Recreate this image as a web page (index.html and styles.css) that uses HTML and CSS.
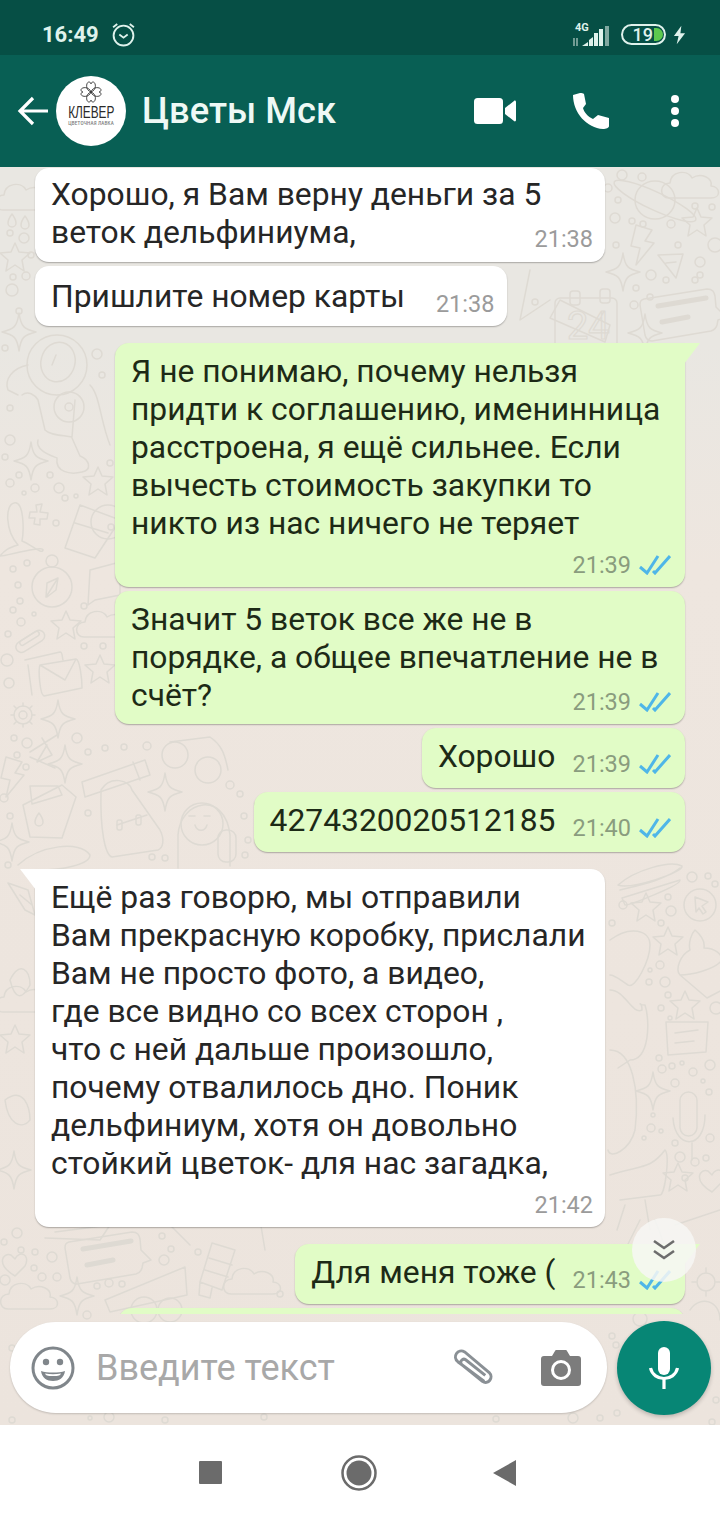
FILE: index.html
```html
<!DOCTYPE html>
<html lang="ru">
<head>
<meta charset="utf-8">
<title>Цветы Мск</title>
<link rel="stylesheet" href="styles.css">
</head>
<body>
<svg class="defs" width="0" height="0" aria-hidden="true">
  <defs>
    <symbol id="ticks" viewBox="0 0 32 20"><path d="M1 12l7 6L19 1M14 16l2 2L31 1" fill="none" stroke="#4fb6e8" stroke-width="3"/></symbol>
    <path id="sp" d="M0-19C2-5 5-3 17 0 5 3 2 5 0 19-2 5-5 3-17 0-5-3-2-5 0-19Z"/>
    <path id="st" d="M0-15 4-6 15-5 7 2 9 13 0 7-9 13-7 2-15-5-4-6Z"/>
    <path id="cl" d="M-24 12C-34 12-34-3-23-3-22-15-6-17-1-8 8-14 20-8 18 0 28 1 28 12 18 12Z"/>
    <path id="bo" d="M-6-20 10-15 3-4 12-2-6 20-2 3-11 1Z"/>
    <path id="dr" d="M0-7C3-3 4-1 4 2A4 4 0 0 1-4 2C-4-1-3-3 0-7Z"/>
    <path id="he" d="M0 12C-20 0-12-12-4-9L0-5C4-14 16-10 10 2Z"/>
    <g id="ch"><path d="M-36-16 27-26C33-26 34-23 35-19L36-8 46 2 38 5 37 10 C36 14 34 15 31 16L-28 26C-32 26-34 24-35 20L-40-10C-40-14-39-15-36-16Z"/><path d="M-22-9 26-17 M-18 7 8 2" stroke-width="5"/></g>
  </defs>
</svg>
<div class="phone">
  <div class="status">
    <span class="clock">16:49</span>
    <svg class="alarm" viewBox="0 0 24 24"><circle cx="12" cy="13" r="9.5"/><path d="M2 5l4-3M22 5l-4-3M8 12l4 3 4-3"/></svg>
    <span class="spacer"></span>
    <span class="net">
      <span class="net-g">4G</span>
      <svg class="bars" viewBox="0 0 38 20"><path d="M2 20v-8M5 12v8" stroke="#9fbdb6" stroke-width="1.4"/><path d="M10 20h6v-4zM17 20h4v-9l-4 3zM22 20h4V7h-4zM27 20h4V3h-4z" fill="#dff2ec"/><path d="M33 20h4V0h-4z" fill="#7fa8a0"/></svg>
    </span>
    <span class="battery"><span class="batt-num">19</span><span class="batt-fill"></span></span>
    <svg class="bolt" viewBox="0 0 14 20"><path d="M9 0 1 11h5l-2 9 9-12H8z" fill="#dff2ec"/></svg>
  </div>
  <header class="toolbar">
    <svg class="back" viewBox="0 0 32 30"><path d="M31 15H3M16 2 3 15l13 13" fill="none" stroke="#fff" stroke-width="3.2"/></svg>
    <div class="avatar">
      <svg class="clover" viewBox="0 0 24 24"><path d="M12 12C6 10 7 2 10 2c1 0 2 1 2 2 0-1 1-2 2-2 3 0 4 8-2 10ZM12 12c2-6 10-5 10-2 0 1-1 2-2 2 1 0 2 1 2 2 0 3-8 4-10-2ZM12 12c6 2 5 10 2 10-1 0-2-1-2-2 0 1-1 2-2 2-3 0-4-8 2-10ZM12 12c-2 6-10 5-10 2 0-1 1-2 2-2-1 0-2-1-2-2 0-3 8-4 10 2Z" fill="none" stroke="#333" stroke-width=".9"/></svg>
      <span class="brand">КЛЕВЕР</span>
      <span class="brand-sub">ЦВЕТОЧНАЯ ЛАВКА</span>
    </div>
    <h1 class="title">Цветы Мск</h1>
    <svg class="video" viewBox="0 0 42 26"><rect width="29" height="26" rx="3.5" fill="#fff"/><path d="M31 10 40 3c1-1 2 0 2 1v18c0 1-1 2-2 1l-9-7z" fill="#fff"/></svg>
    <svg class="call" viewBox="0 0 36 36"><path d="M7 0 0 2C0 20 14 35 30 36 33 36 36 35 36 33V25L25 22 20 26C15 24 11 19 10 15L13 11 11 1C10 0 9 0 7 0Z" fill="#fff"/></svg>
    <div class="dots"><i></i><i></i><i></i></div>
  </header>
  <main class="wall">
    <svg class="doodles" viewBox="0 167 720 1258" aria-hidden="true">
      <g class="dd">
        <use href="#cl" x="27" y="198"/><use href="#dr" x="12" y="221"/><use href="#dr" x="25" y="223"/><use href="#st" x="15" y="258"/><use href="#sp" x="19" y="332"/>
        <use href="#cl" x="693" y="186"/><use href="#st" x="697" y="223"/><use href="#bo" x="642" y="245"/><use href="#sp" x="623" y="272"/><use href="#sp" x="645" y="333"/><use href="#ch" x="680" y="315"/>
        <ellipse cx="655" cy="200" rx="20" ry="19"/><ellipse cx="655" cy="201" rx="45" ry="9" transform="rotate(25 655 201)"/>
        <path d="M658 255 683 254 676 278ZM666 263 676 262"/>
        <path d="M560 300 610 325 605 342 550 318ZM530 270 520 320 550 300"/>
        <g><rect x="555" y="298" width="62" height="58" rx="5"/><rect x="570" y="291" width="10" height="14" rx="3"/><rect x="600" y="289" width="10" height="14" rx="3"/><text x="567" y="339" class="t24">24</text></g>
        <circle cx="57" cy="365" r="30"/><ellipse cx="58" cy="362" rx="17" ry="20" transform="rotate(15 58 362)"/><path d="M52 365 56 355"/><path d="M28 365C12 368 4 380 8 390L18 395M22 395C28 390 35 395 38 400L45 430C50 435 60 435 72 437L75 400"/><circle cx="69" cy="407" r="15"/><circle cx="69" cy="407" r="4"/><path d="M38 440C35 450 50 455 57 458 55 472 70 475 82 472 92 470 90 460 80 456L72 438M90 385C100 395 100 420 110 445"/>
        <use href="#sp" x="31" y="461"/><use href="#st" x="98" y="482"/>
        <path d="M0 556C5 550 8 548 18 545 5 530 5 505 14 503 24 500 24 530 22 541 32 545 42 555 43 550 44 545 2 557 0 556Z"/><path d="M36 505 42 504 40 512 48 513 47 519 40 519 40 525 34 524 35 518 29 518 30 512 37 512Z"/>
        <path d="M80 505 120 520 95 558 65 548ZM75 523 108 533"/><circle cx="108" cy="522" r="17"/>
        <circle cx="52" cy="587" r="20"/><circle cx="52" cy="561" r="6"/><path d="M58 578 46 597 47 583ZM58 578 56 590 47 597"/>
        <path d="M90 570 120 562V595L95 600 88 605Z"/><use href="#cl" x="108" y="625"/><rect x="14" y="636" width="32" height="11" rx="5.5" transform="rotate(-32 30 641)"/><rect x="20" y="636" width="22" height="5" rx="2.5" transform="rotate(-32 30 641)"/>
        <use href="#st" x="66" y="626"/><use href="#st" x="100" y="670"/>
        <path d="M25 660 60 652C63 652 62 658 63 660M32 695 28 665"/><path d="M40 665 76 659C80 660 82 680 82 688L44 696C40 695 38 670 40 665ZM40 665 65 680 76 659"/>
        <circle cx="23" cy="715" r="9"/><circle cx="23" cy="715" r="4"/><path d="M23 703v3M23 724v3M11 715h3M32 715h3M14 706l2 2M32 706l-2 2M14 724l2-2M32 724l-2-2"/>
        <use href="#sp" x="58" y="719"/><use href="#sp" x="65" y="764"/><use href="#sp" x="165" y="792"/><use href="#sp" x="12" y="842"/><use href="#bo" x="12" y="777"/>
        <path d="M30 752 57 735M30 757 55 768M42 738 52 755 37 762 47 745"/>
        <path d="M23 805 62 785 76 797 62 838 30 837ZM30 786H58L62 795 32 804ZM62 838 76 797"/><use href="#dr" x="39" y="820"/>
        <path d="M82 782 145 760 150 775 85 797ZM133 762 140 780"/><path d="M101 790C110 775 130 780 132 790L160 830C165 840 163 848 158 850L112 857C105 855 100 830 101 790ZM117 825 147 815"/><rect x="117" y="820" width="5" height="10" rx="2"/><rect x="136" y="815" width="5" height="10" rx="2"/>
        <circle cx="175" cy="755" r="13"/><circle cx="208" cy="770" r="13"/><path d="M170 742 210 737C222 745 225 755 228 770"/>
        <path d="M178 868V835C180 800 225 790 230 835V866"/><circle cx="202" cy="824" r="21"/><path d="M195 825C197 832 205 832 207 825M189 816h6M204 816h6"/><rect x="218" y="830" width="18" height="32" rx="8"/>
        <path d="M18 865C40 845 80 840 90 855 90 865 60 870 40 870"/><path d="M8 883 28 890 35 915 25 910ZM20 895 32 905"/>
        <path d="M10 980C20 960 30 970 30 985 22 1000 15 1000 10 980ZM5 1100C25 1085 30 1110 30 1120 22 1130 8 1125 5 1100Z"/><use href="#st" x="15" y="1040"/><use href="#sp" x="14" y="1170"/><use href="#cl" x="27" y="1000"/>
        <path d="M618 885C635 870 670 860 682 866 685 872 630 890 618 885ZM620 890C640 885 665 880 680 868M622 898 680 880C682 885 630 905 625 905Z"/>
        <circle cx="700" cy="905" r="16"/><path d="M695 897 708 902 702 906 706 912 703 914 699 908 696 912Z"/>
        <use href="#st" x="646" y="908"/><use href="#st" x="668" y="942"/><use href="#st" x="685" y="1006"/><use href="#st" x="678" y="1178"/>
        <path d="M690 950C688 942 692 933 695 930 702 936 705 942 704 948 716 948 722 955 722 960 715 970 690 975 680 975 675 970 680 955 690 950ZM680 975 707 998 722 990V968"/>
        <path d="M610 940C630 925 650 930 650 945 650 960 635 990 628 985 620 980 615 975 610 975M610 990C625 990 632 1015 642 1010 642 1000 636 1005 645 1005 650 1020 650 1060 630 1060L618 1068"/>
        <path d="M666 1022 708 1022 706 1052 668 1055ZM675 1033 698 1030M675 1043 694 1041"/>
        <use href="#sp" x="653" y="1091"/>
        <rect x="680" y="1092" width="17" height="44" rx="8.5"/><path d="M673 1118C675 1150 705 1150 705 1115M692 1143V1160"/>
        <path d="M610 1050C632 1050 640 1090 635 1130 630 1150 610 1160 608 1150"/>
        <path d="M610 1175C640 1165 650 1170 665 1150 670 1155 665 1195 660 1195L620 1200M617 1230 625 1205M650 1230 645 1200"/>
        <use href="#he" x="712" y="1180"/>
        <circle cx="706" cy="1282" r="9"/><path d="M706 1268v4M706 1292v4M692 1282h4M716 1282h4"/><path d="M640 1220 625 1250M655 1220 670 1260M675 1225 720 1210"/>
        <circle cx="640" cy="1319" r="7"/><path d="M690 1310C700 1295 720 1300 720 1320"/>
        <use href="#ch" x="105" y="1258"/><use href="#he" x="15" y="1264"/><use href="#cl" x="32" y="1297"/><use href="#cl" x="255" y="1282"/><use href="#sp" x="77" y="1296"/>
        <path d="M212 1243 235 1250 222 1290 200 1282ZM205 1270 228 1277M209 1258 232 1265M200 1282 199 1295 210 1298 212 1288"/>
        <path d="M185 1267 105 1300 110 1312 187 1295Z"/><circle cx="144" cy="1310" r="13"/><circle cx="170" cy="1310" r="12"/>
        <path d="M55 1232 110 1225 100 1240 45 1238"/><path d="M170 1225 190 1245M260 1220 265 1250M280 1215C290 1225 300 1220 305 1210"/>
      </g>
      <g class="dots-bg">
        <circle cx="10" cy="233" r="3"/><circle cx="24" cy="238" r="5"/><circle cx="31" cy="255" r="3"/><circle cx="13" cy="277" r="3"/><circle cx="26" cy="276" r="4"/><circle cx="12" cy="290" r="6"/><circle cx="19" cy="311" r="3"/><circle cx="5" cy="348" r="3"/>
        <circle cx="622" cy="175" r="5"/><circle cx="642" cy="177" r="4"/><circle cx="608" cy="188" r="4"/><circle cx="618" cy="200" r="3"/><circle cx="615" cy="218" r="5"/><circle cx="632" cy="221" r="3"/><circle cx="643" cy="224" r="3"/><circle cx="671" cy="224" r="4"/><circle cx="616" cy="245" r="3"/><circle cx="678" cy="245" r="3"/><circle cx="695" cy="206" r="3"/><circle cx="712" cy="207" r="3"/><circle cx="715" cy="245" r="7"/><circle cx="700" cy="262" r="5"/><circle cx="651" cy="275" r="5"/><circle cx="695" cy="280" r="3"/><circle cx="666" cy="280" r="3"/><circle cx="636" cy="288" r="3"/><circle cx="634" cy="305" r="4"/><circle cx="650" cy="297" r="3"/><circle cx="535" cy="302" r="3"/><circle cx="700" cy="275" r="3"/>
        <circle cx="10" cy="483" r="4"/><circle cx="19" cy="475" r="3"/><circle cx="24" cy="493" r="2"/><circle cx="35" cy="488" r="4"/><circle cx="50" cy="475" r="3"/><circle cx="59" cy="488" r="5"/><circle cx="65" cy="498" r="3"/><circle cx="76" cy="496" r="2"/><circle cx="56" cy="523" r="3"/><circle cx="5" cy="457" r="3"/><circle cx="10" cy="440" r="5"/><circle cx="10" cy="408" r="3"/><circle cx="97" cy="354" r="5"/><circle cx="102" cy="375" r="3"/><circle cx="110" cy="463" r="3"/>
        <circle cx="13" cy="569" r="3"/><circle cx="27" cy="563" r="3"/><circle cx="18" cy="585" r="3"/><circle cx="20" cy="601" r="3"/><circle cx="13" cy="610" r="3"/><circle cx="21" cy="622" r="4"/><circle cx="34" cy="614" r="2"/><circle cx="8" cy="634" r="3"/><circle cx="84" cy="606" r="3"/><circle cx="84" cy="646" r="3"/><circle cx="103" cy="646" r="3"/><circle cx="7" cy="660" r="6"/><circle cx="9" cy="683" r="5"/><circle cx="111" cy="527" r="3"/>
        <circle cx="77" cy="738" r="5"/><circle cx="14" cy="738" r="3"/><circle cx="27" cy="743" r="5"/><circle cx="17" cy="755" r="3"/><circle cx="26" cy="767" r="3"/><circle cx="88" cy="752" r="3"/><circle cx="105" cy="748" r="3"/><circle cx="124" cy="747" r="3"/><circle cx="147" cy="746" r="4"/><circle cx="4" cy="798" r="4"/><circle cx="10" cy="816" r="3"/><circle cx="88" cy="813" r="3"/><circle cx="230" cy="785" r="4"/><circle cx="240" cy="794" r="3"/><circle cx="244" cy="816" r="3"/><circle cx="248" cy="840" r="3"/><circle cx="245" cy="855" r="3"/><circle cx="165" cy="858" r="3"/><circle cx="152" cy="857" r="3"/><circle cx="8" cy="865" r="3"/>
        <circle cx="692" cy="877" r="5"/><circle cx="708" cy="876" r="3"/><circle cx="715" cy="884" r="3"/><circle cx="623" cy="905" r="4"/><circle cx="612" cy="923" r="3"/><circle cx="668" cy="897" r="3"/><circle cx="671" cy="911" r="5"/><circle cx="661" cy="923" r="3"/><circle cx="650" cy="970" r="2"/><circle cx="660" cy="965" r="4"/><circle cx="649" cy="982" r="3"/><circle cx="665" cy="982" r="5"/><circle cx="668" cy="995" r="3"/><circle cx="661" cy="1008" r="3"/><circle cx="670" cy="1018" r="2"/><circle cx="716" cy="1008" r="6"/><circle cx="659" cy="1058" r="3"/><circle cx="662" cy="1069" r="4"/><circle cx="672" cy="1066" r="3"/><circle cx="682" cy="1063" r="2"/><circle cx="693" cy="1072" r="4"/><circle cx="710" cy="1065" r="5"/><circle cx="675" cy="1083" r="4"/><circle cx="703" cy="1081" r="2"/><circle cx="709" cy="1092" r="3"/><circle cx="653" cy="1115" r="2"/><circle cx="651" cy="1128" r="4"/><circle cx="661" cy="1131" r="2"/><circle cx="644" cy="1138" r="2"/><circle cx="675" cy="1143" r="3"/><circle cx="680" cy="1157" r="5"/><circle cx="710" cy="1138" r="4"/><circle cx="695" cy="1162" r="4"/><circle cx="706" cy="1158" r="3"/><circle cx="685" cy="1178" r="3"/>
        <circle cx="17" cy="1233" r="5"/><circle cx="21" cy="1250" r="3"/><circle cx="35" cy="1252" r="3"/><circle cx="4" cy="1242" r="3"/><circle cx="52" cy="1257" r="5"/><circle cx="34" cy="1268" r="3"/><circle cx="42" cy="1277" r="4"/><circle cx="57" cy="1277" r="4"/><circle cx="5" cy="1280" r="5"/><circle cx="97" cy="1286" r="3"/><circle cx="109" cy="1283" r="4"/><circle cx="122" cy="1284" r="3"/><circle cx="164" cy="1260" r="5"/><circle cx="171" cy="1249" r="3"/><circle cx="198" cy="1252" r="3"/><circle cx="162" cy="1236" r="3"/><circle cx="87" cy="1315" r="4"/><circle cx="280" cy="1294" r="3"/>
        <circle cx="12" cy="1348" r="3"/><circle cx="12" cy="1420" r="3"/><circle cx="90" cy="1418" r="2"/><circle cx="109" cy="1417" r="5"/><circle cx="165" cy="1420" r="3"/><circle cx="264" cy="1417" r="3"/><circle cx="617" cy="1413" r="3"/><circle cx="600" cy="1418" r="3"/><circle cx="573" cy="1418" r="5"/><circle cx="496" cy="1419" r="3"/><circle cx="612" cy="1336" r="3"/><circle cx="616" cy="1345" r="3"/><circle cx="716" cy="1400" r="3"/><circle cx="712" cy="1422" r="3"/>
      </g>
    </svg>
    <section class="chat">
      <div class="msg in top">
        <p class="text">Хорошо, я Вам верну деньги за 5<br>веток дельфиниума,</p>
        <div class="meta over"><time>21:38</time></div>
      </div>
      <div class="msg in single near">
        <p class="text">Пришлите номер карты</p>
        <div class="meta"><time>21:38</time></div>
      </div>
      <div class="msg out tail">
        <p class="text">Я не понимаю, почему нельзя<br>придти к соглашению, именинница<br>расстроена, я ещё сильнее. Если<br>вычесть стоимость закупки то<br>никто из нас ничего не теряет</p>
        <div class="meta below"><time>21:39</time><svg class="ticks"><use href="#ticks"/></svg></div>
      </div>
      <div class="msg out near">
        <p class="text">Значит 5 веток все же не в<br>порядке, а общее впечатление не в<br>счёт?</p>
        <div class="meta over"><time>21:39</time><svg class="ticks"><use href="#ticks"/></svg></div>
      </div>
      <div class="msg out single near">
        <p class="text">Хорошо</p>
        <div class="meta"><time>21:39</time><svg class="ticks"><use href="#ticks"/></svg></div>
      </div>
      <div class="msg out single near">
        <p class="text">4274320020512185</p>
        <div class="meta"><time>21:40</time><svg class="ticks"><use href="#ticks"/></svg></div>
      </div>
      <div class="msg in tail">
        <p class="text">Ещё раз говорю, мы отправили<br>Вам прекрасную коробку, прислали<br>Вам не просто фото, а видео,<br>где все видно со всех сторон ,<br>что с ней дальше произошло,<br>почему отвалилось дно. Поник<br>дельфиниум, хотя он довольно<br>стойкий цветок- для нас загадка,</p>
        <div class="meta below"><time>21:42</time></div>
      </div>
      <div class="msg out single tail">
        <p class="text">Для меня тоже (</p>
        <div class="meta"><time>21:43</time><svg class="ticks"><use href="#ticks"/></svg></div>
      </div>
      <div class="msg out cut near"><p class="text">&nbsp;</p></div>
      <button class="jump" type="button" aria-label="Вниз">
        <svg viewBox="0 0 24 22"><path d="M2 2l10 7 10-7M2 12l10 7 10-7" fill="none" stroke="#6d6d6d" stroke-width="2.6"/></svg>
      </button>
    </section>
    <footer class="composer">
      <div class="input">
        <svg class="smile" viewBox="0 0 44 44"><circle cx="22" cy="22" r="20" fill="none" stroke="#80868b" stroke-width="3"/><circle cx="15" cy="16" r="3.2" fill="#80868b"/><circle cx="29" cy="16" r="3.2" fill="#80868b"/><path d="M10 25c6 2 18 2 24 0-1 7-6 10-12 10s-11-3-12-10z" fill="#80868b"/><path d="M14 27.500c5 1 11 1 16 0-1 2-2 2.500-8 2.500s-7-.5-8-2.500z" fill="#fff"/></svg>
        <span class="placeholder">Введите текст</span>
        <svg class="clip" viewBox="0 0 44 40"><path d="M35 33 8 13C2 8 8-1 15 3l25 21c5 5-1 13-7 9L12 16c-3-3 1-7 4-5l20 16" fill="none" stroke="#8a9095" stroke-width="3" transform="translate(0 1) scale(.98)"/></svg>
        <svg class="camera" viewBox="0 0 40 36"><path d="M3 6h8l3-5c0-1 1-1 2-1h8c1 0 2 0 2 1l3 5h8c2 0 3 1 3 3v24c0 2-1 3-3 3H3c-2 0-3-1-3-3V9c0-2 1-3 3-3z" fill="#7c7c7c"/><circle cx="20" cy="20" r="8.500" fill="#7c7c7c" stroke="#fff" stroke-width="3"/></svg>
      </div>
      <button class="mic" type="button" aria-label="Голос">
        <svg viewBox="0 0 30 42"><rect x="9" y="0" width="12" height="28" rx="6" fill="#fff"/><path d="M1.500 21C3 28 9 31.500 15 31.500S27 28 28.500 21M15 31v11" fill="none" stroke="#fff" stroke-width="3.200"/></svg>
      </button>
    </footer>
  </main>
  <nav class="navbar">
    <span class="nav-square"></span>
    <svg class="nav-home" viewBox="0 0 36 36"><circle cx="18" cy="18" r="16.500" fill="none" stroke="#6b6b6b" stroke-width="2.500"/><circle cx="18" cy="18" r="12.500" fill="#6b6b6b"/></svg>
    <svg class="nav-back" viewBox="0 0 24 26"><path d="M0 13 23 0v26z" fill="#6b6b6b"/></svg>
  </nav>
</div>
</body>
</html>
```
FILE: styles.css
```css
* { box-sizing: border-box; }
html, body { margin: 0; padding: 0; }
body { font-family: Roboto, "Noto Sans", sans-serif; background: #fff; }
.defs { position: absolute; }
.phone { width: 720px; height: 1520px; display: flex; flex-direction: column; overflow: hidden; }

.status { height: 55px; flex: none; background: #064f45; display: flex; align-items: center; padding: 14px 34px 0 42px; color: #dff2ec; }
.clock { font-size: 22px; font-weight: 700; }
.alarm { width: 25px; height: 25px; margin-left: 12px; fill: none; stroke: #dff2ec; stroke-width: 1.8; }
.spacer { flex: 1; }
.net { position: relative; width: 38px; height: 22px; margin-right: 11px; }
.net-g { position: absolute; left: 3px; top: -1px; font-size: 11px; font-weight: 700; line-height: 10px; }
.bars { position: absolute; left: 0; top: 2px; width: 38px; height: 20px; }
.battery { width: 45px; height: 21px; border: 2px solid #dff2ec; border-radius: 11px; display: flex; align-items: center; justify-content: flex-end; padding-right: 1px; gap: 1px; }
.batt-num { font-size: 18px; font-weight: 500; line-height: 17px; }
.batt-fill { width: 9px; height: 13px; background: #5dc94e; border-radius: 0 7px 7px 0; }
.bolt { width: 13px; height: 20px; margin-left: 7px; }

.toolbar { height: 112px; flex: none; background: #085f54; display: flex; align-items: center; padding-left: 17px; position: relative; z-index: 2; }
.back { width: 32px; height: 30px; flex: none; }
.avatar { width: 70px; height: 70px; border-radius: 50%; background: #fff; margin-left: 7px; flex: none; display: flex; flex-direction: column; align-items: center; color: #2a2a2a; padding-top: 4px; }
.clover { width: 24px; height: 24px; flex: none; }
.brand { font-family: "Liberation Sans", sans-serif; font-size: 16px; line-height: 16px; transform: scaleX(.74); margin-top: 1px; }
.brand-sub { font-size: 4.500px; line-height: 5px; font-weight: 500; color: #777; letter-spacing: .2px; white-space: nowrap; }
.title { margin: 0 0 0 16px; flex: 1; font-size: 36.300px; font-weight: 500; line-height: 40px; color: #eef9f5; white-space: nowrap; }
.video { width: 42px; height: 26px; flex: none; margin-right: 57px; }
.call { width: 36px; height: 36px; flex: none; margin-right: 62px; margin-top: -1px; }
.dots { width: 9px; flex: none; margin-right: 40px; display: flex; flex-direction: column; gap: 4px; }
.dots i { width: 8px; height: 8px; border-radius: 50%; background: #fff; display: block; }

.wall { flex: 1; min-height: 0; position: relative; display: flex; flex-direction: column; background: linear-gradient(#e9e7e2 0, #e9e7e2 14%, #eee6df 32%, #ece4dd 100%); }
.doodles { position: absolute; inset: 0; width: 720px; height: 1258px; }
.dd { fill: none; stroke: #dedad3; stroke-width: 1.500; stroke-linejoin: round; stroke-linecap: round; }
.dots-bg { fill: none; stroke: #dedad3; stroke-width: 1.500; }
.t24 { font-family: Roboto, sans-serif; font-size: 38px; fill: none; stroke: #dedad3; stroke-width: 1.200; }

.chat { flex: 1; min-height: 0; position: relative; overflow: hidden; display: flex; flex-direction: column; align-items: flex-start; padding: 1px 35px 0; }
.msg { position: relative; flex: none; background: #fff; border-radius: 14px; padding: 9px 12px 8px 16px; box-shadow: 0 1px 1.500px rgba(0,0,0,.28); display: flex; flex-direction: column; width: 570px; margin-top: 17px; color: #262626; }
.msg.out { align-self: flex-end; background: #e1fcc6; color: #1d2a16; padding-right: 14px; }
.msg.near { margin-top: 4px; }
.msg.top { margin-top: 0; padding-top: 7px; padding-bottom: 9px; }
.msg.single { width: auto; flex-direction: row; align-items: flex-end; padding-bottom: 13px; }
.msg.in.single { padding: 11px 13px 11px 16px; }
.text { margin: 0; font-size: 31.800px; line-height: 38px; white-space: nowrap; }
.meta { height: 28px; display: flex; align-items: center; justify-content: flex-end; align-self: flex-end; gap: 8px; color: #9b9b9b; font-size: 23.500px; line-height: 28px; }
.out .meta { color: #8a9c7e; }
.meta.over { margin-top: -26px; }
.meta.below { margin-top: 9px; }
.single .meta { margin-left: 31px; margin-bottom: -3px; }
.out.single .meta { margin-left: 17px; }
.ticks { width: 32px; height: 20px; }
.tail::before { content: ""; position: absolute; top: 0; width: 16px; height: 21px; background: inherit; }
.in.tail { border-top-left-radius: 0; }
.out.tail { border-top-right-radius: 0; }
.in.tail::before { left: -15px; clip-path: polygon(0 0, 100% 0, 100% 100%); }
.out.tail::before { right: -15px; clip-path: polygon(0 0, 100% 0, 0 100%); }
.cut { width: 567px; height: 40px; }
.jump { position: absolute; right: 24px; top: 1051px; width: 64px; height: 64px; border: 0; padding: 0; border-radius: 50%; background: rgba(247,247,245,.85); display: flex; align-items: center; justify-content: center; }
.jump svg { width: 24px; height: 22px; }

.composer { height: 111px; flex: none; position: relative; display: flex; align-items: flex-start; padding: 7px 9px 0 10px; gap: 10px; }
.input { flex: 1; height: 91px; margin-top: 1px; background: #fff; border-radius: 46px; box-shadow: 0 1px 2px rgba(0,0,0,.18); display: flex; align-items: center; padding: 0 26px 0 21px; }
.smile { width: 44px; height: 44px; flex: none; }
.placeholder { flex: 1; margin-left: 21px; font-size: 36px; color: #a8a8a8; line-height: 40px; white-space: nowrap; }
.clip { width: 44px; height: 40px; flex: none; margin-right: 47px; margin-left: -3px; }
.camera { width: 40px; height: 36px; flex: none; }
.mic { width: 94px; height: 94px; border: 0; padding: 0; border-radius: 50%; background: #078675; box-shadow: 0 2px 4px rgba(0,0,0,.22); display: flex; align-items: center; justify-content: center; flex: none; }
.mic svg { width: 30px; height: 42px; }

.navbar { height: 95px; flex: none; background: #fff; display: flex; align-items: center; padding-left: 199px; }
.nav-square { width: 23px; height: 23px; background: #6b6b6b; border-radius: 1px; margin-right: 119px; }
.nav-home { width: 36px; height: 36px; margin-right: 116px; }
.nav-back { width: 24px; height: 26px; }
```
